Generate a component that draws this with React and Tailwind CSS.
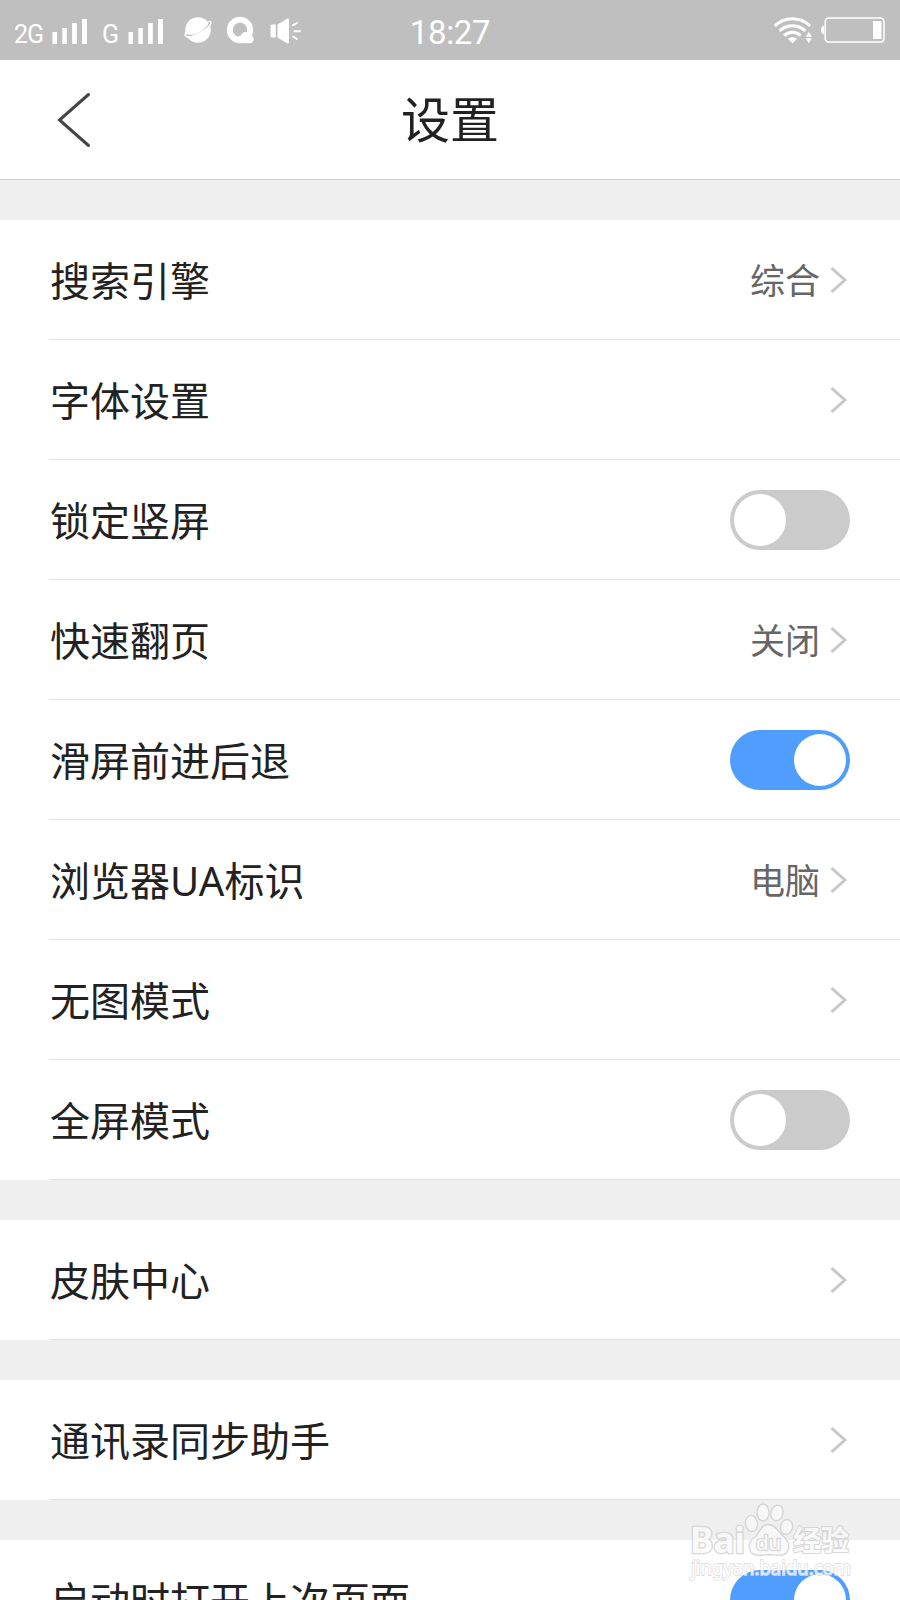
const sections = [
  [
    { label: "搜索引擎", value: "综合" },
    { label: "字体设置" },
    { label: "锁定竖屏", toggle: true, on: false },
    { label: "快速翻页", value: "关闭" },
    { label: "滑屏前进后退", toggle: true, on: true },
    { label: "浏览器UA标识", value: "电脑" },
    { label: "无图模式" },
    { label: "全屏模式", toggle: true, on: false },
  ],
  [{ label: "皮肤中心" }],
  [{ label: "通讯录同步助手" }],
  [{ label: "启动时打开上次页面", toggle: true, on: true }],
];

function SignalBars() {
  return (
    <svg width="36" height="26" viewBox="0 0 36 26" fill="currentColor">
      <rect x="0.5" y="14" width="4.5" height="12" />
      <rect x="10.3" y="10" width="4.5" height="16" />
      <rect x="20.1" y="5" width="4.7" height="21" />
      <rect x="30" y="1" width="5" height="25" />
    </svg>
  );
}

function PlanetIcon() {
  return (
    <svg width="28" height="28" viewBox="0 0 28 28">
      <circle cx="14" cy="14" r="12.8" fill="currentColor" />
      <path
        d="M2 19C8 20.4 14.5 18 19 14.8C22.8 12.2 24.8 9.6 25.4 7"
        fill="none"
        stroke="#bfbfbf"
        strokeWidth="1.4"
      />
      <path
        d="M1.6 16.5C.4 20 1.8 21.8 6.5 20.8C15.5 18.6 26.6 11.4 27 6.8C27 5.6 26 5.2 24.4 5.4"
        fill="none"
        stroke="currentColor"
        strokeWidth="1.4"
      />
    </svg>
  );
}

function BrowserIcon() {
  return (
    <svg width="28" height="28" viewBox="0 0 28 28">
      <circle
        cx="14"
        cy="14"
        r="10.2"
        fill="none"
        stroke="currentColor"
        strokeWidth="6"
      />
      <path
        d="M12.5 27C10 23 12 19.5 15.2 19.3C16 15.5 22 14.8 23.4 18.6C27.5 18.8 28.8 24 26.5 26.2C25.5 27.2 24 27.2 22.5 27.2Z"
        fill="currentColor"
      />
    </svg>
  );
}

function SpeakerIcon() {
  return (
    <svg width="32" height="26" viewBox="0 0 32 26" fill="currentColor">
      <path d="M2 6.5H5.8V19.5H2Q0.5 19.5 0.5 18V8Q0.5 6.5 2 6.5Z" />
      <path d="M7.5 6.5L17 .8Q19 0 19 2V24Q19 26 17 25.2L7.5 19.5Z" />
      <path
        d="M23 7.2L27 5M24.5 13.3H30M23 18.5L27 21"
        stroke="currentColor"
        strokeWidth="1.9"
        strokeLinecap="round"
      />
    </svg>
  );
}

function WifiIcon() {
  return (
    <svg width="40" height="28" viewBox="0 0 40 28" fill="none">
      <g stroke="currentColor" strokeWidth="3">
        <path d="M1.8 9.8C12 .4 27 .4 37.2 9.8" />
        <path d="M6.6 14.8C14 8 25 8 32.4 14.8" />
        <path d="M11.2 19.6C16 15.2 23 15.2 27.8 19.6" />
      </g>
      <path
        d="M14.8 22.8C17.6 20.6 21.4 20.6 24.2 22.8L19.5 27.3Z"
        fill="currentColor"
      />
      <path
        d="M35.8 15.8L38.8 20.7H32.8ZM35.8 27.3L38.8 22.3H32.8Z"
        fill="currentColor"
      />
    </svg>
  );
}

function BatteryIcon() {
  return (
    <svg width="65" height="26" viewBox="0 0 65 26">
      <path d="M4 8.5V17.5C0 17 0 9 4 8.5Z" fill="currentColor" />
      <rect
        x="5.2"
        y="1"
        width="58.8"
        height="24"
        rx="3.5"
        fill="none"
        stroke="currentColor"
        strokeWidth="1.5"
      />
      <rect x="53" y="4" width="8.5" height="18" fill="currentColor" />
    </svg>
  );
}

function StatusBar() {
  return (
    <div className="grid h-[60px] grid-cols-[1fr_auto_1fr] items-center bg-[#bfbfbf] font-[Roboto,sans-serif] text-white">
      <div className="flex items-center pt-0.5 pl-3.5">
        <span className="w-[38px] pt-2 text-[25px] leading-7 tracking-[-1px]">
          2G
        </span>
        <SignalBars />
        <span className="ml-3.5 w-[26px] pt-2 text-[25px] leading-7">G</span>
        <SignalBars />
        <div className="ml-5 flex items-center pb-0.5">
          <PlanetIcon />
          <div className="ml-3.5">
            <BrowserIcon />
          </div>
          <div className="ml-4 pt-px">
            <SpeakerIcon />
          </div>
        </div>
      </div>
      <span className="pt-1.5 text-[33px] leading-8 tracking-[-0.3px]">
        18:27
      </span>
      <div className="flex items-center justify-end gap-[7px] pr-[15px]">
        <WifiIcon />
        <BatteryIcon />
      </div>
    </div>
  );
}

function Header() {
  return (
    <header className="grid h-[120px] grid-cols-3 items-center border-b border-[#d2d2d2] bg-white">
      <svg
        className="ml-14"
        width="36"
        height="56"
        viewBox="0 0 36 56"
        fill="none"
        stroke="#444"
        strokeWidth="3"
        strokeLinecap="round"
      >
        <path d="M32.5 2.5L3.5 28L32.5 53.5" />
      </svg>
      <h1 className="pb-px text-center text-[49px] leading-none">设置</h1>
    </header>
  );
}

function Toggle({ on }) {
  return (
    <div
      className={`flex h-[60px] w-[120px] items-center rounded-full px-1 ${
        on ? "justify-end bg-[#4f9efd]" : "bg-[#cbcbcb]"
      }`}
    >
      <div className="size-[52px] rounded-full bg-white" />
    </div>
  );
}

function Row({ item }) {
  return (
    <div className="ml-[50px] flex h-[120px] items-center justify-between border-b border-[#e2e2e2] pr-[50px]">
      <span className="pt-0.5 text-[40px] leading-none">{item.label}</span>
      {item.toggle ? (
        <Toggle on={item.on} />
      ) : (
        <div className="flex items-center">
          <span className="mr-2.5 pt-px text-[35px] leading-none text-[#666]">
            {item.value}
          </span>
          <svg
            className="mr-[3px]"
            width="17"
            height="28"
            viewBox="0 0 17 28"
            fill="none"
            stroke="#c8c8c8"
            strokeWidth="3"
          >
            <path d="M1.5 2L14.8 14L1.5 26" />
          </svg>
        </div>
      )}
    </div>
  );
}

function Watermark() {
  return (
    <svg
      className="absolute top-[1500px] left-[685px] opacity-80"
      width="175"
      height="90"
      viewBox="0 0 175 90"
    >
      <g fill="#fafafa" stroke="#d0d0d0" strokeWidth="1.4">
        <text
          x="5"
          y="53"
          textLength="55"
          lengthAdjust="spacingAndGlyphs"
          fontFamily="Noto Sans, sans-serif"
          fontWeight="bold"
          fontSize="35"
          strokeWidth="2.6"
          strokeLinejoin="round"
          paintOrder="stroke"
        >
          Bai
        </text>
        <ellipse cx="66.5" cy="23.5" rx="6" ry="8" transform="rotate(-8 66.5 23.5)" />
        <ellipse cx="78" cy="12.5" rx="6" ry="8.5" />
        <ellipse cx="92" cy="13" rx="6" ry="8" transform="rotate(15 92 13)" />
        <ellipse cx="101.5" cy="27" rx="6" ry="7.5" transform="rotate(15 101.5 27)" />
        <path d="M83 24.5C90 24.5 93 31 97 35C103 40 106 46 102 52C98 57 91 55 83.5 54.5C76 55 70 57 66 52C62 46 65 40 71 36C75 32 76 24.5 83 24.5Z" />
        <text
          x="71"
          y="50"
          textLength="25"
          lengthAdjust="spacingAndGlyphs"
          fontFamily="Liberation Sans, sans-serif"
          fontSize="21"
          strokeWidth="2.4"
          strokeLinejoin="round"
          paintOrder="stroke"
        >
          du
        </text>
        <text
          x="108"
          y="51"
          fontFamily="Noto Sans CJK SC, sans-serif"
          fontWeight="bold"
          fontSize="28"
          strokeWidth="2.2"
          strokeLinejoin="round"
          paintOrder="stroke"
        >
          经验
        </text>
      </g>
      <text
        x="6"
        y="75"
        textLength="160"
        lengthAdjust="spacingAndGlyphs"
        fill="#fff"
        stroke="#dcdcdc"
        strokeWidth="1.8"
        paintOrder="stroke"
        fontFamily="Noto Sans, sans-serif"
        fontSize="19"
      >
        jingyan.baidu.com
      </text>
    </svg>
  );
}

export default function App() {
  return (
    <div className="relative h-[1600px] w-[900px] overflow-hidden bg-[#efefef] font-['Noto_Sans','Noto_Sans_CJK_SC',sans-serif] text-[#222]">
      <StatusBar />
      <Header />
      <main className="mt-10 flex flex-col gap-10">
        {sections.map((items, index) => (
          <section key={index} className="bg-white">
            {items.map((item) => (
              <Row key={item.label} item={item} />
            ))}
          </section>
        ))}
      </main>
      <Watermark />
    </div>
  );
}
